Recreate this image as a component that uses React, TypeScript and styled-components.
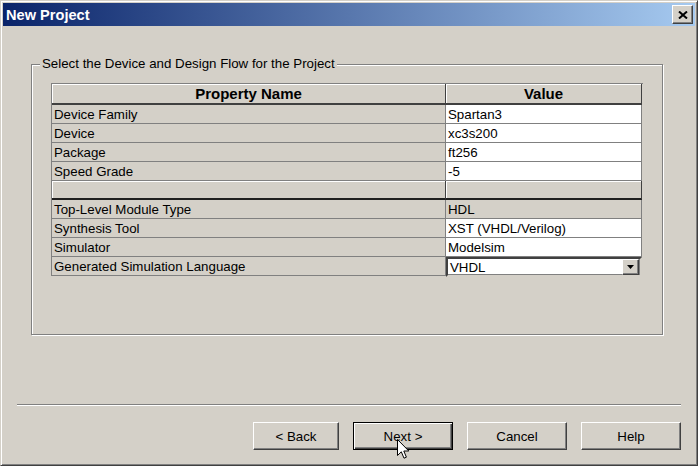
import React from "react";
import styled, { createGlobalStyle } from "styled-components";

const GlobalStyle = createGlobalStyle`
  html, body {
    margin: 0;
    padding: 0;
    background: #d4d0c8;
  }
  body {
    font-family: "Liberation Sans", Arial, sans-serif;
    font-size: 13.3px;
    color: #000;
  }
`;

const Window = styled.div`
  position: relative;
  width: 698px;
  height: 466px;
  box-sizing: border-box;
  background: #d4d0c8;
  border: 1px solid;
  border-color: #d4d0c8 #404040 #404040 #d4d0c8;
  box-shadow: inset 1px 1px 0 #fff, inset -1px -1px 0 #808080;
  padding: 2px;
  display: flex;
  flex-direction: column;
`;

const TitleBar = styled.div`
  height: 23px;
  flex: none;
  display: flex;
  align-items: center;
  justify-content: space-between;
  background: linear-gradient(to right, #0a246a, #a6caf0);
  padding: 0 2px 0 3px;
`;

const Title = styled.span`
  color: #fff;
  font-weight: bold;
  font-size: 14.6px;
`;

const CloseButton = styled.div`
  width: 21px;
  height: 19px;
  box-sizing: border-box;
  display: flex;
  align-items: center;
  justify-content: center;
  background: #d4d0c8;
  border: 1px solid;
  border-color: #fff #404040 #404040 #fff;
  box-shadow: inset -1px -1px 0 #808080;
`;

const Body = styled.div`
  flex: 1;
  display: flex;
  flex-direction: column;
  padding-top: 38px;
`;

const GroupBox = styled.div`
  position: relative;
  width: 632px;
  height: 271px;
  margin-left: 28px;
  box-sizing: border-box;
  border: 1px solid #808080;
  box-shadow: inset 1px 1px 0 #fff, 1px 1px 0 #fff;
  padding: 18px 0 0 19px;
`;

const GroupLabel = styled.span`
  position: absolute;
  top: -9px;
  left: 8px;
  padding: 0 2px;
  background: #d4d0c8;
  line-height: 16px;
`;

const Table = styled.div`
  display: grid;
  grid-template-columns: 394px 196px;
  width: 591px;
  border-top: 1px solid #808080;
  border-left: 1px solid #808080;
`;

const HeaderCell = styled.div`
  height: 21px;
  box-sizing: border-box;
  background: #d4d0c8;
  border-right: 1px solid #404040;
  border-bottom: 2px solid #404040;
  box-shadow: inset 1px 1px 0 #fff;
  display: flex;
  align-items: center;
  justify-content: center;
  font-weight: bold;
  font-size: 15px;
`;

const Cell = styled.div<{ $white?: boolean }>`
  height: 19px;
  box-sizing: border-box;
  background: ${(p) => (p.$white ? "#fff" : "#d4d0c8")};
  border-right: 1px solid #808080;
  border-bottom: 1px solid #808080;
  padding-left: 2px;
  display: flex;
  align-items: center;
  white-space: nowrap;
`;

const BlankCell = styled.div`
  height: 19px;
  box-sizing: border-box;
  background: #d4d0c8;
  border-right: 1px solid #404040;
  border-bottom: 2px solid #202020;
  box-shadow: inset 1px 1px 0 #fff;
`;

const ComboCell = styled.div`
  height: 20px;
  box-sizing: border-box;
  background: #fff;
  border: 2px solid;
  border-color: #404040 #d4d0c8 #d4d0c8 #404040;
  box-shadow: inset -1px -1px 0 #808080;
  display: flex;
  align-items: center;
  justify-content: space-between;
  padding-left: 2px;
  margin-bottom: -1px;
`;

const ComboButton = styled.div`
  width: 17px;
  height: 16px;
  box-sizing: border-box;
  background: #d4d0c8;
  border: 1px solid;
  border-color: #fff #404040 #404040 #fff;
  box-shadow: inset -1px -1px 0 #808080;
  display: flex;
  align-items: center;
  justify-content: center;
  margin-right: 1px;
`;

const Separator = styled.div`
  margin: 69px 14px 0;
  border-top: 1px solid #808080;
  border-bottom: 1px solid #fff;
`;

const ButtonRow = styled.div`
  display: flex;
  justify-content: flex-end;
  gap: 14px;
  margin-top: 16px;
  padding-right: 14px;
`;

const Button = styled.div<{ $width: number; $default?: boolean }>`
  position: relative;
  width: ${(p) => p.$width}px;
  height: 28px;
  box-sizing: border-box;
  display: flex;
  align-items: center;
  justify-content: center;
  background: #d4d0c8;
  border: 1px solid;
  border-color: ${(p) =>
    p.$default ? "#000" : "#fff #404040 #404040 #fff"};
  box-shadow: ${(p) =>
    p.$default
      ? "inset 1px 1px 0 #fff, inset -1px -1px 0 #404040, inset -2px -2px 0 #808080"
      : "inset -1px -1px 0 #808080"};
`;

const Cursor = styled.svg`
  position: absolute;
  left: 43px;
  top: 16px;
`;

const rows: { name: string; value: string; white: boolean }[] = [
  { name: "Device Family", value: "Spartan3", white: true },
  { name: "Device", value: "xc3s200", white: true },
  { name: "Package", value: "ft256", white: true },
  { name: "Speed Grade", value: "-5", white: true },
];

const rows2: { name: string; value: string; white: boolean }[] = [
  { name: "Top-Level Module Type", value: "HDL", white: false },
  { name: "Synthesis Tool", value: "XST (VHDL/Verilog)", white: true },
  { name: "Simulator", value: "Modelsim", white: true },
];

export default function App() {
  return (
    <>
      <GlobalStyle />
      <Window>
        <TitleBar>
          <Title>New Project</Title>
          <CloseButton>
            <svg width="10" height="8" viewBox="0 0 10 8">
              <path d="M1 0.5 L9 7.5 M9 0.5 L1 7.5" stroke="#000" strokeWidth="2" />
            </svg>
          </CloseButton>
        </TitleBar>
        <Body>
          <GroupBox>
            <GroupLabel>Select the Device and Design Flow for the Project</GroupLabel>
            <Table>
              <HeaderCell>Property Name</HeaderCell>
              <HeaderCell>Value</HeaderCell>
              {rows.map((r) => (
                <React.Fragment key={r.name}>
                  <Cell>{r.name}</Cell>
                  <Cell $white={r.white}>{r.value}</Cell>
                </React.Fragment>
              ))}
              <BlankCell />
              <BlankCell />
              {rows2.map((r) => (
                <React.Fragment key={r.name}>
                  <Cell>{r.name}</Cell>
                  <Cell $white={r.white}>{r.value}</Cell>
                </React.Fragment>
              ))}
              <Cell>Generated Simulation Language</Cell>
              <ComboCell>
                VHDL
                <ComboButton>
                  <svg width="7" height="4" viewBox="0 0 7 4">
                    <path d="M0 0 H7 L3.5 4 Z" fill="#000" />
                  </svg>
                </ComboButton>
              </ComboCell>
            </Table>
          </GroupBox>
          <Separator />
          <ButtonRow>
            <Button $width={86}>&lt; Back</Button>
            <Button $width={100} $default>
              Next &gt;
              <Cursor width="13" height="21" viewBox="0 0 13 21">
                <path
                  d="M0.5 0.5 L0.5 16.5 L4.3 12.8 L7 19.2 L9.4 18.2 L6.8 12 L11.8 12 Z"
                  fill="#fff"
                  stroke="#000"
                  strokeWidth="1"
                />
              </Cursor>
            </Button>
            <Button $width={100}>Cancel</Button>
            <Button $width={100}>Help</Button>
          </ButtonRow>
        </Body>
      </Window>
    </>
  );
}
